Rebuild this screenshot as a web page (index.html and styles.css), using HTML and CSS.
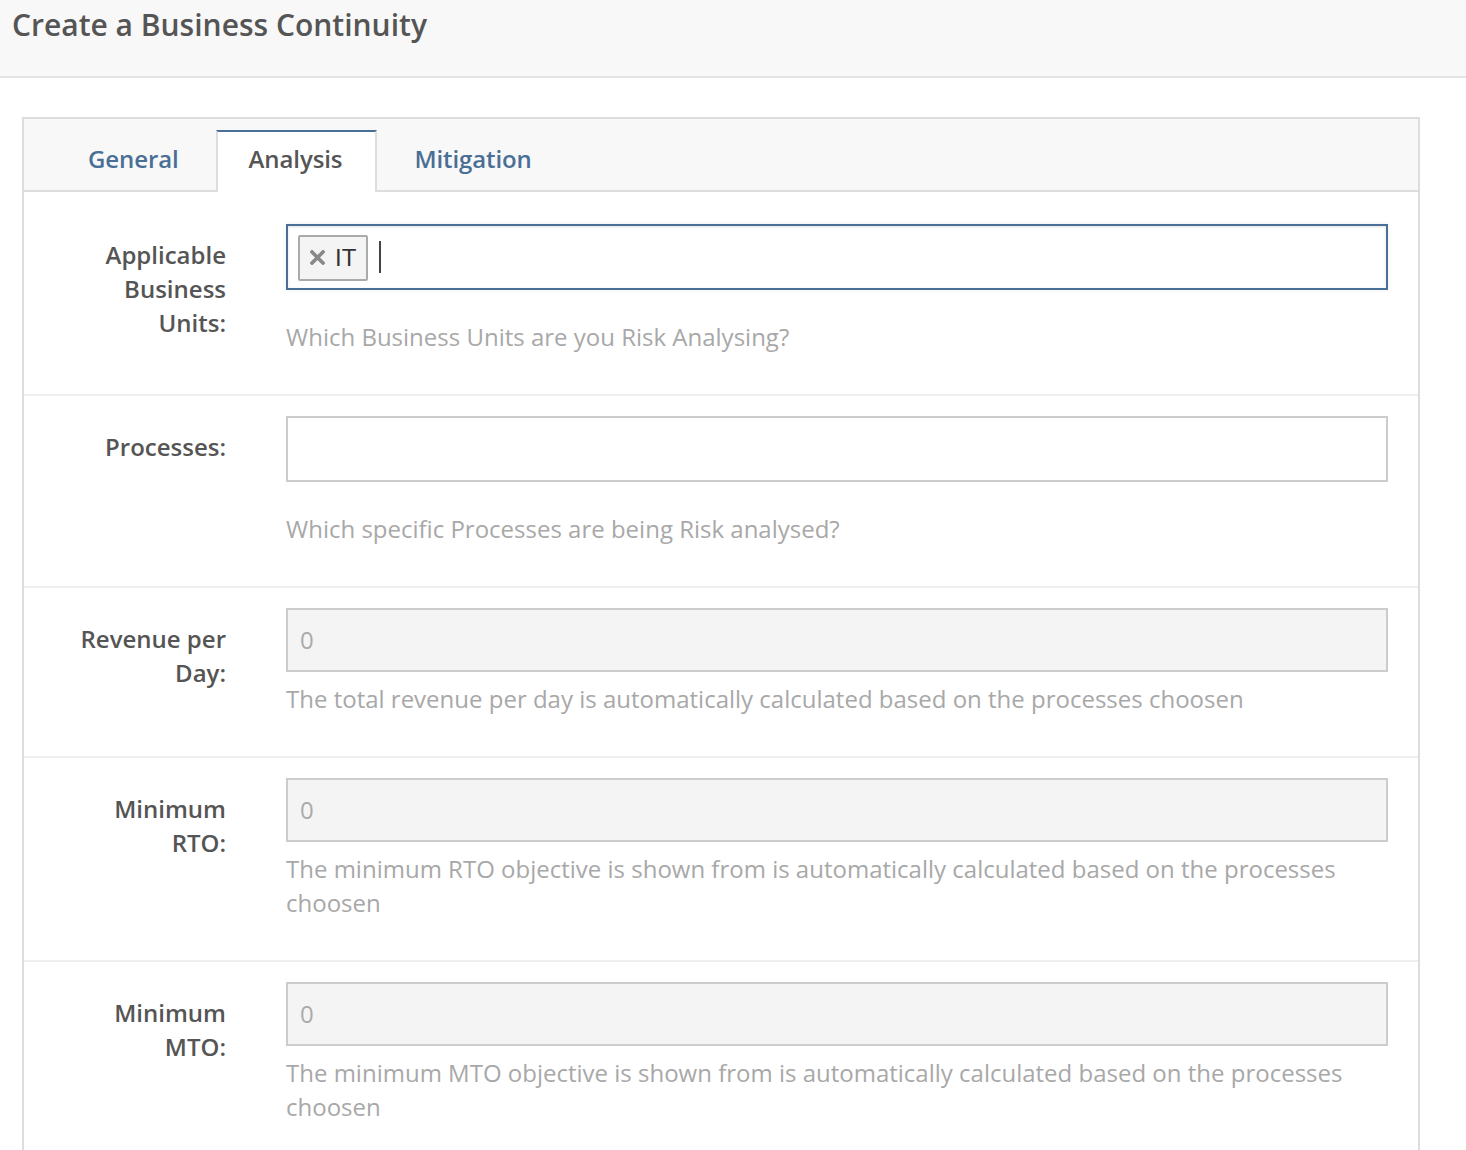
FILE: index.html
```html
<!DOCTYPE html>
<html lang="en">
<head>
<meta charset="utf-8">
<title>Create a Business Continuity</title>
<link rel="stylesheet" href="styles.css">
</head>
<body>
<header class="page-header">
  <h1 class="page-title">Create a Business Continuity</h1>
</header>
<main class="main">
  <section class="panel">
    <nav class="tabs">
      <a class="tab">General</a>
      <a class="tab tab-active">Analysis</a>
      <a class="tab">Mitigation</a>
    </nav>
    <div class="tab-content">
      <div class="form-row">
        <label class="form-label">Applicable Business Units:</label>
        <div class="form-field">
          <div class="multi-select multi-select-focus">
            <span class="tag"><svg class="tag-remove" width="15" height="15" viewBox="0 0 15 15" aria-hidden="true"><path d="M2 2 L13 13 M13 2 L2 13" stroke="#888" stroke-width="3.6" stroke-linecap="square"/></svg><span class="tag-text">IT</span></span>
            <span class="caret-line"></span>
          </div>
          <p class="help help-select">Which Business Units are you Risk Analysing?</p>
        </div>
      </div>
      <div class="form-row">
        <label class="form-label">Processes:</label>
        <div class="form-field">
          <div class="multi-select"></div>
          <p class="help help-select">Which specific Processes are being Risk analysed?</p>
        </div>
      </div>
      <div class="form-row">
        <label class="form-label">Revenue per Day:</label>
        <div class="form-field">
          <div class="input-disabled">0</div>
          <p class="help">The total revenue per day is automatically calculated based on the processes choosen</p>
        </div>
      </div>
      <div class="form-row">
        <label class="form-label">Minimum RTO:</label>
        <div class="form-field">
          <div class="input-disabled">0</div>
          <p class="help">The minimum RTO objective is shown from is automatically calculated based on the processes choosen</p>
        </div>
      </div>
      <div class="form-row">
        <label class="form-label">Minimum MTO:</label>
        <div class="form-field">
          <div class="input-disabled">0</div>
          <p class="help">The minimum MTO objective is shown from is automatically calculated based on the processes choosen</p>
        </div>
      </div>
    </div>
  </section>
</main>
</body>
</html>
```
FILE: styles.css
```css
* { box-sizing: border-box; }
html, body { margin: 0; padding: 0; background: #fff; }
body {
  font-family: "Open Sans", "Liberation Sans", sans-serif;
  color: #555;
}
.page-header {
  height: 78px;
  background: #f8f8f8;
  border-bottom: 2px solid #e4e4e4;
  padding: 0 12px;
}
.page-title {
  margin: 0;
  font-size: 30px;
  font-weight: 600;
  line-height: 50px;
  color: #555;
}
.main {
  padding: 39px 0 0 22px;
}
.panel {
  width: 1398px;
  border: 2px solid #ddd;
  border-bottom: none;
  min-height: 1100px;
}
.tabs {
  display: flex;
  gap: 4px;
  background: #f8f8f8;
  border-bottom: 2px solid #ddd;
  padding: 11px 0 0 31px;
  height: 73px;
}
.tab {
  display: block;
  padding: 0 31px;
  border: 2px solid transparent;
  border-bottom: none;
  font-size: 24px;
  font-weight: 600;
  line-height: 54px;
  letter-spacing: -0.1px;
  color: #4a6f96;
  height: 62px;
}
.tab-active {
  background: #fff;
  color: #555;
  padding: 0 33px 0 31px;
  border-color: #ddd;
  border-top-color: #4a6f96;
}
.tab-content {
  padding-top: 12px;
}
.form-row {
  display: grid;
  grid-template-columns: 160px 1fr;
  column-gap: 60px;
  padding: 20px 30px 40px 42px;
  border-bottom: 2px solid #eee;
}
.form-label {
  text-align: right;
  font-size: 24px;
  font-weight: 600;
  line-height: 34px;
  padding-top: 14px;
  color: #555;
}
.form-field { min-width: 0; }
.multi-select {
  height: 66px;
  border: 2px solid #ccc;
  background: #fff;
  display: flex;
  align-items: center;
  padding-left: 10px;
}
.multi-select-focus {
  border-color: #4a6f96;
  box-shadow: inset 0 1px 3px rgba(0,0,0,0.12), 0 0 4px rgba(0,0,0,0.08);
}
.tag {
  display: flex;
  align-items: center;
  height: 46px;
  margin-top: 1px;
  border: 2px solid #aaa;
  border-radius: 2px;
  background: #f4f4f4;
  padding: 0 10px 0 10px;
}
.tag-remove {
  display: block;
  flex: none;
  margin-right: 10px;
}
.tag-text {
  font-family: "Liberation Sans", "Open Sans", sans-serif;
  font-size: 24px;
  color: #333;
}
.caret-line {
  display: block;
  width: 2px;
  height: 32px;
  background: #444;
  margin-left: 11px;
}
.input-disabled {
  height: 64px;
  border: 2px solid #ccc;
  background: #f4f4f4;
  font-size: 24px;
  line-height: 60px;
  color: #aaa;
  padding-left: 12px;
}
.help {
  margin: 10px 0 0;
  font-size: 24px;
  line-height: 34px;
  color: #a8a8a8;
}
.help-select {
  margin-top: 30px;
}
```
